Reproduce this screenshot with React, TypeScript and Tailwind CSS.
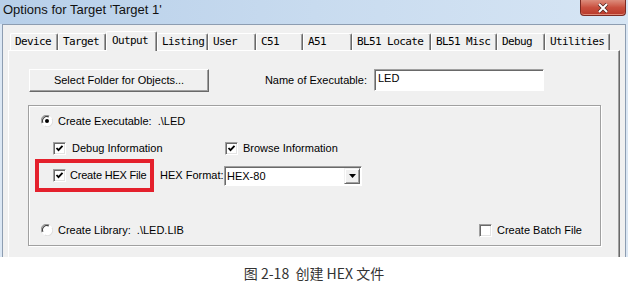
import React from "react";

const ui = { fontFamily: '"Liberation Sans", Arial, sans-serif' };
const mono = { fontFamily: '"DejaVu Sans Mono", "Liberation Mono", monospace' };

const tabs = [
  { label: "Device", w: "w-[48px]" },
  { label: "Target", w: "w-[48px]" },
  { label: "Output", w: "w-[51px]", active: true },
  { label: "Listing", w: "w-[51px]" },
  { label: "User", w: "w-[48px]" },
  { label: "C51", w: "w-[47px]" },
  { label: "A51", w: "w-[49px]" },
  { label: "BL51 Locate", w: "w-[79px]" },
  { label: "BL51 Misc", w: "w-[66px]" },
  { label: "Debug", w: "w-[48px]" },
  { label: "Utilities", w: "w-[65px]" },
];

function Check({ checked }: { checked?: boolean }) {
  return (
    <span className="flex h-[13px] w-[13px] shrink-0 items-center justify-center border border-t-[#a0a0a0] border-l-[#a0a0a0] border-b-white border-r-white bg-white shadow-[inset_1px_1px_0_#696969,inset_-1px_-1px_0_#e3e3e3]">
      {checked && (
        <svg width="9" height="9" viewBox="0 0 9 9">
          <path d="M1.5 4 L3.5 6.2 L7.5 1.8" fill="none" stroke="#000" strokeWidth="1.8" />
        </svg>
      )}
    </span>
  );
}

function Radio({ on }: { on?: boolean }) {
  return (
    <svg width="12" height="12" viewBox="0 0 12 12" className="shrink-0">
      <circle cx="6" cy="6" r="5.5" fill="#fff" />
      <path d="M1 8.2 A5.3 5.3 0 0 1 8.2 1" fill="none" stroke="#9a9a9a" strokeWidth="1.1" />
      <path d="M2 7.8 A4.3 4.3 0 0 1 7.8 2" fill="none" stroke="#444" strokeWidth="1.1" />
      <path d="M11 3.8 A5.3 5.3 0 0 1 3.8 11" fill="none" stroke="#e0e0e0" strokeWidth="1.1" />
      {on && <circle cx="6" cy="6" r="2" fill="#000" />}
    </svg>
  );
}

export default function App() {
  return (
    <div className="h-[284px] w-[628px] overflow-hidden whitespace-nowrap bg-white text-[11px] text-black" style={ui}>
      <div className="flex h-[257px] flex-col overflow-hidden bg-[#dbe7f4]">
        {/* title bar */}
        <div className="flex h-[24px] shrink-0 items-start justify-between bg-gradient-to-r from-[#b7cfe9] via-[#c8dbef] to-[#d6e5f4]">
          <span className="pl-[3px] pt-[1px] text-[13px] leading-[17px] text-[#111]">Options for Target 'Target 1'</span>
          <div className="mr-[2px] flex h-[16px] w-[46px] items-center justify-center rounded-b-[4px] border border-t-0 border-[#7c2a22] bg-gradient-to-b from-[#dc8c7c] via-[#c9503f] to-[#b8382a] shadow-[inset_0_-1px_0_#e08a78]">
            <svg width="12" height="10" viewBox="0 0 12 10">
              <path d="M2 1 L10 9 M10 1 L2 9" stroke="#4a2420" strokeWidth="3.4" />
              <path d="M2 1 L10 9 M10 1 L2 9" stroke="#fff" strokeWidth="2" />
            </svg>
          </div>
        </div>

        {/* dialog body */}
        <div className="mx-[2px] flex flex-1 flex-col border border-b-0 border-[#8d9db1] bg-[#f0f0f0] px-[5px] pt-[6px]">
          <div className="relative z-10 ml-[2px] flex h-[19px] items-end" style={mono}>
            {tabs.map((t) =>
              t.active ? (
                <div
                  key={t.label}
                  className={`${t.w} -mb-px h-[20px] shrink-0 rounded-t-[2px] border-l border-t border-r border-white border-r-[#696969] bg-[#f0f0f0] pl-[5px] text-[11px] leading-[18px] tracking-[-0.6px] shadow-[inset_-1px_0_0_#a0a0a0]`}
                >
                  {t.label}
                </div>
              ) : (
                <div
                  key={t.label}
                  className={`${t.w} h-[17px] shrink-0 rounded-t-[2px] border-l border-t border-r border-white border-r-[#696969] pl-[4px] text-[11px] leading-[16px] tracking-[-0.6px] shadow-[inset_-1px_0_0_#a0a0a0]`}
                >
                  {t.label}
                </div>
              )
            )}
          </div>

          {/* panel */}
          <div className="flex-1 border-l border-t border-r border-white border-r-[#696969] shadow-[inset_-1px_0_0_#a0a0a0]">
            <div className="ml-[20px] mt-[17px] flex h-[24px] items-center">
              <button className="h-[23px] w-[180px] border border-t-white border-l-white border-b-[#696969] border-r-[#696969] bg-[#f0f0f0] text-[11px] shadow-[inset_-1px_-1px_0_#a0a0a0]">
                Select Folder for Objects...
              </button>
              <span className="w-[158px] text-right">Name of Executable:</span>
              <div className="ml-[7px] h-[22px] w-[170px] border border-t-[#a0a0a0] border-l-[#a0a0a0] border-b-white border-r-white bg-white pl-[3px] pt-[1px] leading-[14px] shadow-[inset_1px_1px_0_#696969]">
                LED
              </div>
            </div>

            {/* group box */}
            <div className="ml-[19px] mt-[13px] h-[141px] w-[573px] border border-[#a0a0a0] shadow-[inset_1px_1px_0_#fff,1px_1px_0_#fff]">
              <div className="ml-[12px] mt-[9px] flex h-[12px] items-center gap-[5px]">
                <Radio on />
                <span>Create Executable:&nbsp; .\LED</span>
              </div>

              <div className="ml-[24px] mt-[15px] flex h-[13px] items-center">
                <div className="flex w-[172px] items-center gap-[6px]">
                  <Check checked />
                  <span>Debug Information</span>
                </div>
                <div className="flex items-center gap-[5px]">
                  <Check checked />
                  <span>Browse Information</span>
                </div>
              </div>

              <div className="ml-[6px] mt-[4px] flex h-[33px] items-center">
                <div className="flex h-[33px] w-[119px] shrink-0 items-center gap-[4px] border-4 border-[#e4202c] pl-[14px]">
                  <Check checked />
                  <span className="tracking-[-0.2px]">Create HEX File</span>
                </div>
                <span className="ml-[6px] w-[64px] shrink-0">HEX Format:</span>
                <div className="flex h-[20px] w-[138px] items-center justify-between border border-t-[#a0a0a0] border-l-[#a0a0a0] border-b-white border-r-white bg-white pl-[2px] pr-px shadow-[inset_1px_1px_0_#696969]">
                  <span className="leading-[14px]">HEX-80</span>
                  <span className="flex h-[16px] w-[16px] items-center justify-center border border-t-[#f0f0f0] border-l-[#f0f0f0] border-b-[#696969] border-r-[#696969] bg-[#f0f0f0] shadow-[inset_1px_1px_0_#fff,inset_-1px_-1px_0_#a0a0a0]">
                    <svg width="7" height="4" viewBox="0 0 7 4">
                      <path d="M0 0 H7 L3.5 4 Z" fill="#000" />
                    </svg>
                  </span>
                </div>
              </div>

              <div className="ml-[12px] mr-[10px] mt-[32px] flex h-[12px] items-center">
                <Radio />
                <span className="ml-[5px]">Create Library:&nbsp; .\LED.LIB</span>
                <div className="ml-auto flex w-[111px] items-center gap-[5px]">
                  <Check />
                  <span>Create Batch File</span>
                </div>
              </div>
            </div>
          </div>
        </div>
      </div>

      <div
        className="flex h-[27px] justify-center pt-[8px] text-[14px] leading-[16px] text-[#333]"
        style={{ fontFamily: '"Noto Sans CJK SC", "Noto Sans", sans-serif' }}
      >
        图 2-18&nbsp; 创建 HEX 文件
      </div>
    </div>
  );
}
